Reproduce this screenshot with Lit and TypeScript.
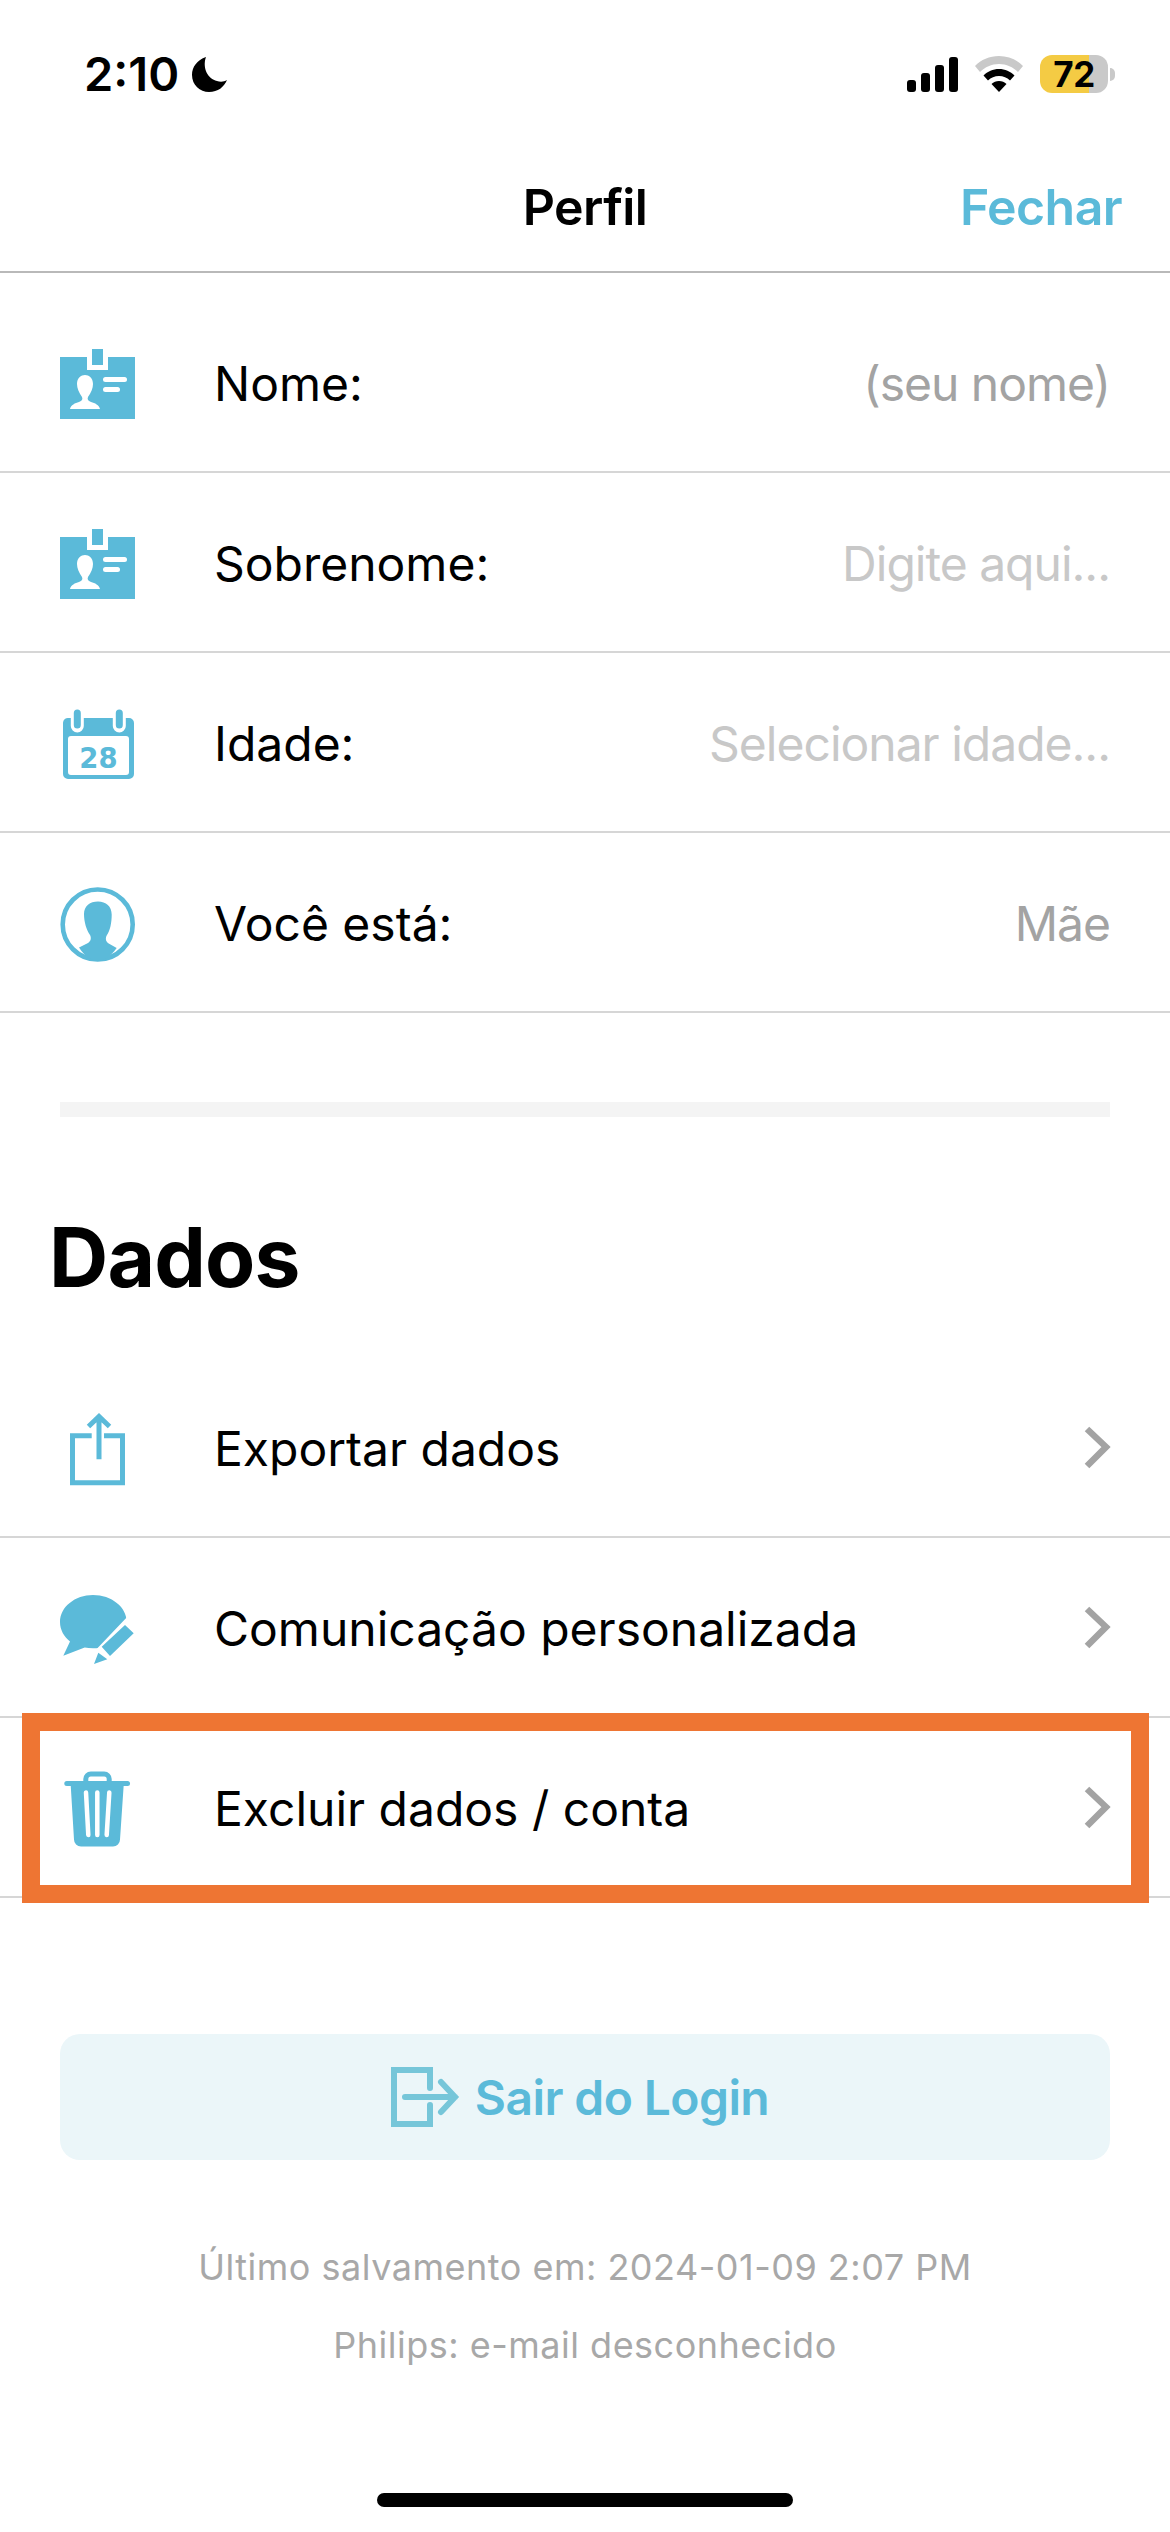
import { LitElement, html, css, svg } from "lit";
import { customElement } from "lit/decorators.js";

const BLUE = "#5bbad9";

const badge = svg`<path fill="${BLUE}" d="M10 24h27v13h21V24h27v62H10z"/><rect x="42" y="16" width="11" height="16" fill="${BLUE}"/>
  <path fill="#fff" d="M20 76c1-4 5-6 9-7 3-1 4-3 3-5-3-4-5-9-5-13 0-6 4-9 8-9s8 3 8 9c0 4-2 9-5 13-1 2 0 4 3 5 4 1 8 3 9 7z"/>
  <rect x="53" y="44" width="24" height="5" rx="2.5" fill="#fff"/><rect x="53" y="54" width="17" height="5" rx="2.5" fill="#fff"/>`;

const calendar = svg`<path fill="${BLUE}" fill-rule="evenodd" d="M19 25h60a5 5 0 0 1 5 5v51a5 5 0 0 1-5 5H18a5 5 0 0 1-5-5V30a5 5 0 0 1 6-5zM21 43a3 3 0 0 0-3 3v33a3 3 0 0 0 3 3h55a3 3 0 0 0 3-3V46a3 3 0 0 0-3-3z"/>
  <path d="M27.3 20v13M69.3 20v13" stroke="#fff" stroke-width="13" stroke-linecap="round"/>
  <path d="M27.3 20v12M69.3 20v12" stroke="${BLUE}" stroke-width="7" stroke-linecap="round"/>
  <text x="48.5" y="74.5" text-anchor="middle" font-family="'DejaVu Sans'" font-weight="700" font-size="27.5" fill="${BLUE}">28</text>`;

const person = svg`<circle cx="47.7" cy="51.5" r="35" fill="none" stroke="${BLUE}" stroke-width="4.6"/>
  <path fill="${BLUE}" d="M48 28.5c8 0 13.7 5 13.7 13 0 8-1.500 16-5 21-1.500 3-1 6 2 8l8 4.500C60 84 54 88 48 88s-13-4-19-13.500l9-4.500c3-2 3.500-5 2-8-3.500-5-6-13-6-21 0-8 6-12.500 14-12.500z"/>`;

const share = svg`<path fill="none" stroke="${BLUE}" stroke-width="5" d="M41.700 37.800H22.500v47h50v-47H54"/>
  <path fill="none" stroke="${BLUE}" stroke-width="5" d="M49 61.300V19M38.500 28.500 49 18.500l10.500 10"/>`;

const chat = svg`<path fill="${BLUE}" d="M43 17c18.500 0 33.700 12 33.700 27 0 15-15 26.300-33.700 26.300-3 0-5.800-.3-8.300-.8L13.300 77.700 20 63.500C14 58.500 10 52 10 44c0-15 15-27 33-27z"/>
  <path fill="#fff" d="M79 37 88 47V72H60L48 84l-8-6z"/>
  <path fill="${BLUE}" d="M75 47l8.700 8.300L60 78l-8.300-9.300zM48.300 74.700l9 6.600L44 86z"/>`;

const trash = svg`<path fill="none" stroke="${BLUE}" stroke-width="5" d="M35.800 25v-4a5 5 0 0 1 5-5h13.400a5 5 0 0 1 5 5v4"/>
  <rect x="14.300" y="23" width="65.700" height="5" rx="2.500" fill="${BLUE}"/>
  <path fill="${BLUE}" d="M20.700 27h53L70 81.500a7 7 0 0 1-7 7H31a7 7 0 0 1-7-7z"/>
  <path stroke="#fff" stroke-width="4.500" stroke-linecap="round" d="M36 34.500 38.300 77M47.300 34.500V77M59.300 34.500 56.700 77"/>`;

const chevron = html`<svg class="chevron" viewBox="0 0 30 46"><path fill="none" stroke="#a3a3a3" stroke-width="6.500" d="M5 4l19 18L5 41"/></svg>`;

const profileRows = [
  { icon: badge, label: "Nome:", value: "(seu nome)", tone: "mid" },
  { icon: badge, label: "Sobrenome:", value: "Digite aqui...", tone: "light" },
  { icon: calendar, label: "Idade:", value: "Selecionar idade...", tone: "light" },
  { icon: person, label: "Você está:", value: "Mãe", tone: "mid" },
];

const dataRows = [
  { icon: share, label: "Exportar dados", marked: false },
  { icon: chat, label: "Comunicação personalizada", marked: false },
  { icon: trash, label: "Excluir dados / conta", marked: true },
];

@customElement("app-root")
export class AppRoot extends LitElement {
  static styles = css`
    :host {
      display: block;
      width: 1170px;
      height: 2532px;
      background: #fff;
      color: #000;
      font-family: Inter, "Liberation Sans", sans-serif;
      overflow: hidden;
    }
    .status {
      height: 120px;
      box-sizing: border-box;
      padding: 55px 55px 0 84px;
      display: flex;
      justify-content: space-between;
      align-items: flex-start;
    }
    .clock {
      display: flex;
      align-items: center;
      gap: 13px;
      font-size: 47px;
      font-weight: 600;
      line-height: 38px;
    }
    .moon {
      width: 36px;
      height: 36px;
    }
    .indicators {
      display: flex;
      align-items: center;
      gap: 17px;
    }
    .signal {
      width: 51px;
      height: 35px;
      display: block;
    }
    .wifi {
      width: 48px;
      height: 36px;
      display: block;
    }
    .battery {
      display: flex;
      align-items: center;
      gap: 2px;
    }
    .cell {
      width: 68px;
      height: 38px;
      border-radius: 12px;
      background: linear-gradient(90deg, #f4cb44 0 72%, #c9c9c9 72%);
      font-size: 35px;
      font-weight: 700;
      line-height: 38px;
      text-align: center;
      letter-spacing: -0.5px;
    }
    .nub {
      width: 5px;
      height: 13px;
      border-radius: 0 5px 5px 0;
      background: #c9c9c9;
    }
    .nav {
      height: 153px;
      box-sizing: border-box;
      border-bottom: 2px solid #b9b9b9;
      padding-top: 22px;
      display: grid;
      grid-template-columns: 1fr auto 1fr;
      align-items: center;
      font-size: 50px;
      font-weight: 600;
    }
    .nav .title {
      grid-column: 2;
      letter-spacing: -0.6px;
    }
    .nav .close {
      grid-column: 3;
      justify-self: end;
      margin-right: 48px;
      color: #5bbad9;
      letter-spacing: -0.6px;
    }
    .form {
      padding-top: 20px;
    }
    .row {
      position: relative;
      height: 180px;
      box-sizing: border-box;
      border-bottom: 2px solid #d6d6d6;
      padding: 2px 60px 0 50px;
      display: flex;
      align-items: center;
      font-size: 48px;
    }
    .data .row {
      padding-right: 58px;
    }
    .icon {
      width: 100px;
      height: 100px;
      flex: none;
      margin-right: 64px;
      display: block;
    }
    .label {
      flex: 1;
      letter-spacing: 0;
    }
    .value {
      letter-spacing: -1px;
    }
    .mid {
      color: #a3a3a3;
    }
    .light {
      color: #c8c8c8;
    }
    .rule {
      height: 15px;
      margin: 89px 60px 0;
      background: #f4f4f4;
    }
    h2 {
      margin: 0;
      height: 241px;
      box-sizing: border-box;
      padding: 94px 0 0 49px;
      font-size: 82px;
      line-height: 94px;
      font-weight: 700;
      letter-spacing: -0.8px;
    }
    .chevron {
      width: 30px;
      height: 46px;
      flex: none;
      display: block;
    }
    .mark {
      position: absolute;
      left: 22px;
      right: 21px;
      top: -5px;
      bottom: -7px;
      border: 18px solid #ee7533;
      pointer-events: none;
    }
    .logout {
      margin: 136px 60px 0;
      height: 126px;
      border-radius: 20px;
      background: #ebf6f9;
      display: flex;
      align-items: center;
      justify-content: center;
      padding-right: 12px;
      gap: 14px;
      font-size: 48px;
      font-weight: 600;
      color: #5bbad9;
      letter-spacing: -0.6px;
    }
    .logout svg {
      width: 72px;
      height: 66px;
      display: block;
    }
    .foot {
      margin-top: 86px;
      display: flex;
      flex-direction: column;
      align-items: center;
      gap: 36px;
      font-size: 36px;
      line-height: 42px;
      letter-spacing: 0.5px;
      color: #a8a8a8;
    }
    .home {
      width: 416px;
      height: 14px;
      border-radius: 7px;
      background: #000;
      margin: 127px auto 0;
    }
  `;

  private icon(body: unknown) {
    return html`<svg class="icon" viewBox="0 0 100 100">${body}</svg>`;
  }

  render() {
    return html`
      <div class="status">
        <div class="clock">
          <span>2:10</span>
          <svg class="moon" viewBox="0 0 36 36"><path d="M14 1C5 4 0 11 0 19c0 10 8 17 17 17 9 0 15-5 18-12-3 2-7 2-10 1C16 23 10 12 14 1z"/></svg>
        </div>
        <div class="indicators">
          <svg class="signal" viewBox="0 0 51 35">
            <rect x="0" y="23" width="9" height="12" rx="3"/><rect x="14" y="16" width="9" height="19" rx="3"/>
            <rect x="28" y="8" width="9" height="27" rx="3"/><rect x="42" y="0" width="9" height="35" rx="3"/>
          </svg>
          <svg class="wifi" viewBox="0 0 48 36">
            <path fill="#c9c9c9" d="M24 0c9.500 0 18 3.700 24 10l-5 6C38 11 31.500 8 24 8S10 11 5 16l-5-6C6 3.700 14.500 0 24 0z"/>
            <path d="M24 13c6 0 11.500 2.400 15.500 6.500l-4.500 5c-3-3-6.700-4.500-11-4.500s-8 1.500-11 4.500l-4.500-5C12.500 15.400 18 13 24 13z"/>
            <path d="M24 25c3 0 5.500 1 7.500 3L24 36l-7.500-8c2-2 4.500-3 7.500-3z"/>
          </svg>
          <div class="battery"><div class="cell">72</div><div class="nub"></div></div>
        </div>
      </div>

      <div class="nav"><span class="title">Perfil</span><span class="close">Fechar</span></div>

      <div class="form">
        ${profileRows.map(
          (r) => html`<div class="row">
            ${this.icon(r.icon)}
            <span class="label">${r.label}</span>
            <span class="value ${r.tone}">${r.value}</span>
          </div>`
        )}
      </div>

      <div class="rule"></div>
      <h2>Dados</h2>

      <div class="data">
        ${dataRows.map(
          (r) => html`<div class="row">
            ${this.icon(r.icon)}
            <span class="label">${r.label}</span>
            ${chevron}
            ${r.marked ? html`<div class="mark"></div>` : ""}
          </div>`
        )}
      </div>

      <div class="logout">
        <svg viewBox="0 0 72 66" fill="none" stroke="#76c6d9" stroke-width="6">
          <path d="M41 24V6H5v54h36V41" stroke-linecap="round"/>
          <path d="M16 33h50M52 18l14 15-14 15" stroke-linecap="round"/>
        </svg>
        <span>Sair do Login</span>
      </div>

      <div class="foot">
        <span>Último salvamento em: 2024-01-09 2:07 PM</span>
        <span>Philips: e-mail desconhecido</span>
      </div>

      <div class="home"></div>
    `;
  }
}
